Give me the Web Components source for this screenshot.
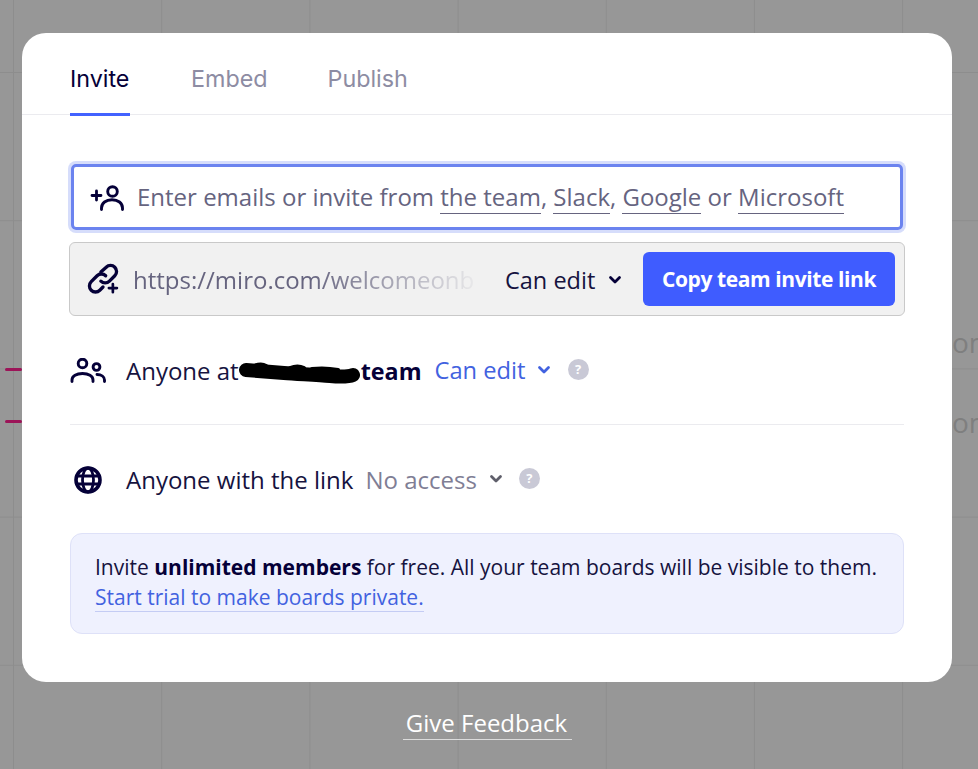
<!DOCTYPE html>
<html>
<head>
<meta charset="utf-8">
<title>Invite</title>
<style>
html, body { margin: 0; height: 100%; overflow: hidden; }
body {
  width: 978px; height: 769px;
  font-family: "Open Sans", sans-serif;
  background-color: #979797;
  background-image:
    linear-gradient(to right, #8d8d8d 1px, transparent 1px),
    linear-gradient(to bottom, #8d8d8d 1px, transparent 1px);
  background-size: 148.2px 148.2px;
  background-position: 13px 72px;
}
</style>
</head>
<body>
<board-backdrop></board-backdrop>
<share-modal>
  <modal-tabs></modal-tabs>
  <invite-field></invite-field>
  <link-bar></link-bar>
  <access-row icon="team" redacted label="Anyone at" strong="team" value="Can edit" tone="blue"></access-row>
  <hr-line></hr-line>
  <access-row icon="globe" label="Anyone with the link" value="No access" tone="grey"></access-row>
  <info-banner>
    Invite <b>unlimited members</b> for free. All your team boards will be visible to them.
    <a slot="link">Start trial to make boards private.</a>
  </info-banner>
</share-modal>
<feedback-link>Give Feedback</feedback-link>

<script>
const chevron = `<svg width="14" height="10" viewBox="0 0 14 10" fill="none"><path d="M2.500 2.500 7 7l4.500-4.500" stroke="currentColor" stroke-width="2.800" stroke-linecap="round" stroke-linejoin="round"/></svg>`

const icons = {
  addUser: `<svg width="34" height="28" viewBox="0 0 34 28" fill="none" stroke="#050038" stroke-width="2.900" stroke-linecap="round"><circle cx="22.500" cy="8.500" r="4.800"/><path d="M11.500 26.500v-1.500c0-5 4.500-8.200 10.500-8.200s10.500 3.200 10.500 8.200v1.500"/><path stroke-width="2.800" d="M2 12.500h9M6.500 8v9"/></svg>`,
  link: `<svg width="30" height="30" viewBox="1 1.500 28 28" fill="none" stroke="#050038" stroke-linecap="round" stroke-linejoin="round" style="overflow:visible"><path stroke-width="3.100" d="M13 9 L18 4.500a5.600 5.600 0 0 1 8 8l-5 5a5.600 5.600 0 0 1-8 0"/><path stroke-width="3.100" d="M17.500 12.500a5.600 5.600 0 0 0-8 0L4 18a5.600 5.600 0 0 0 8 8l3-3"/><path stroke-width="2.500" d="M20.500 24h7.500M24.200 20.200v7.600"/></svg>`,
  team: `<svg width="36" height="26" viewBox="0 0 36 26" fill="none" stroke="#050038" stroke-width="2.900" stroke-linecap="round"><circle cx="12.500" cy="5.500" r="4.300"/><circle cx="26.500" cy="9" r="3.400"/><path d="M2 23.500v-1.500c0-4 4.500-6.500 10.500-6.500s10.500 2.500 10.500 6.500v1.500"/><path d="M27 16.500c4.500 0 7.500 2.300 7.500 5.500v1.500"/></svg>`,
  globe: `<svg width="28" height="28" viewBox="0 0 28 28" fill="none" stroke="#050038"><circle cx="14" cy="14" r="12" stroke-width="3.600"/><ellipse cx="14" cy="14" rx="5.500" ry="12" stroke-width="2.800"/><path stroke-width="2.800" d="M2.500 10h23M2.500 18h23"/></svg>`
}

// every element here just renders its own template into an open shadow root
function define(name, html) {
  customElements.define(name, class extends HTMLElement {
    constructor() {
      super()
      this.attachShadow({ mode: 'open' })
    }
    connectedCallback() {
      this.shadowRoot.innerHTML = typeof html === 'function' ? html(this) : html
    }
  })
}

define('board-backdrop', `
  <style>
    :host { position: absolute; inset: 0; overflow: hidden; color: #7f7f7f; font: 28px/38px "Open Sans", sans-serif; }
    i { position: absolute; left: 5px; width: 17px; height: 3px; background: #9c1458; border-radius: 2px; }
    span { position: absolute; left: 952px; }
  </style>
  <i style="top:368px"></i>
  <i style="top:420px"></i>
  <span style="top:323px">om</span>
  <span style="top:403px">om</span>
`)

define('share-modal', `
  <style>
    :host {
      display: block; box-sizing: border-box; position: absolute;
      left: 22px; top: 33px; width: 930px; height: 649px;
      background: #fff; border-radius: 24px;
      color: #050038;
    }
  </style>
  <slot></slot>
`)

define('modal-tabs', `
  <style>
    :host { display: flex; gap: 61px; height: 81px; padding-left: 48px; border-bottom: 1px solid #ebebef; margin-bottom: 49px; font: 400 23.300px Inter, sans-serif; }
    span { box-sizing: border-box; height: 83px; padding-top: 31px; color: #8d8ca3; }
    span:last-child { margin-left: -1px; }
    .on { width: 60px; color: #050038; border-bottom: 3px solid #4262ff; }
  </style>
  <span class="on">Invite</span><span>Embed</span><span>Publish</span>
`)

define('invite-field', `
  <style>
    :host {
      display: flex; align-items: center; gap: 13px; box-sizing: border-box;
      width: 832px; height: 66px; margin-left: 49px; padding: 0 0 0 16px;
      border: 3px solid #6b83ef; border-radius: 5px;
      box-shadow: 0 0 0 3px #d6ddfb;
      font-size: 24px; color: #66647f;
    }
    u { text-decoration: none; border-bottom: 1px solid #66647f; }
    svg { flex: none; }
    span { white-space: nowrap; margin-top: -2px; }
  </style>
  ${icons.addUser}
  <span>Enter emails or invite from <u>the team</u>, <u>Slack</u>, <u>Google</u> or <u>Microsoft</u></span>
`)

define('link-bar', `
  <style>
    :host {
      display: flex; align-items: center; box-sizing: border-box;
      width: 836px; height: 74px; margin: 12px 0 0 47px; padding: 0 9px 0 18px;
      background: #f1f1f1; border: 1px solid #c9c9c9; border-radius: 6px;
      font-size: 23.500px; color: #16133f;
    }
    svg { flex: none; }
    .url { flex: none; width: 352px; margin-left: 15px; padding-top: 1px; white-space: nowrap; font-size: 24px; color: #66647f;
      -webkit-mask-image: linear-gradient(to right, #000 50%, transparent 100%); mask-image: linear-gradient(to right, #000 50%, transparent 100%); }
    .perm { display: flex; align-items: center; gap: 13px; margin-left: 20px; padding-top: 1px; }
    .perm svg { margin-top: 1px; color: #050038; }
    button { margin-left: auto; width: 252px; height: 54px; border: 0; border-radius: 6px; background: #3f5cff; color: #fff; font: 700 21px "Open Sans", sans-serif; letter-spacing: -0.400px; padding: 0; }
  </style>
  ${icons.link}
  <div class="url">https://miro.com/welcomeonb</div>
  <div class="perm">Can edit ${chevron}</div>
  <button>Copy team invite link</button>
`)

define('access-row', el => {
  const blue = el.getAttribute('tone') === 'blue'
  const strong = el.getAttribute('strong')
  return `
  <style>
    :host {
      display: flex; align-items: center; position: relative; box-sizing: border-box;
      height: 36px; margin: 37px 0 0 48px; font-size: 24px; color: #16133f;
    }
    .ic { flex: none; width: 56px; display: flex; }
    :host([icon=globe]) .ic { padding-left: 4px; width: 52px; }
    .label { white-space: nowrap; margin-top: -2px; }
    b { margin-left: 122px; font-size: 23.300px; font-weight: 700; color: #050038; }
    .val { display: flex; align-items: center; gap: ${blue ? 11 : 12}px; margin: -2px 0 0 ${blue ? 13 : 12}px; font-size: ${blue ? '23.700px' : '24px'}; color: ${blue ? '#4262e0' : '#7f7e95'}; white-space: nowrap; }
    .val svg { color: ${blue ? '#4262e0' : '#5f5f6b'}; }
    .help { flex: none; width: 21px; height: 21px; margin: -3px 0 0 ${blue ? 17 : 16}px; border-radius: 50%; background: #c9c9d6; color: #fff; font: 700 13px/21px "Open Sans", sans-serif; text-align: center; }
    .scribble { position: absolute; left: 168px; top: 0; }
  </style>
  <div class="ic">${icons[el.getAttribute('icon')]}</div>
  <div class="label">${el.getAttribute('label')}${strong ? `<b>${strong}</b>` : ''}</div>
  <div class="val">${el.getAttribute('value')} ${chevron}</div>
  <div class="help">?</div>
  ${el.hasAttribute('redacted') ? `<svg class="scribble" width="124" height="36" viewBox="0 0 124 36" fill="none"><path d="M8 17c12 1 24 2 38 3s34 2 46 3 18 1 23-1" stroke="#000" stroke-width="14" stroke-linecap="round"/><path d="M16 13c5-2 9-2 12 0M52 15c5-2 10-2 14 0M74 16c8-1 16-1 26 1" stroke="#000" stroke-width="4" stroke-linecap="round"/></svg>` : ''}
  `
})

define('hr-line', `
  <style>:host { display: block; height: 1px; width: 834px; margin: 35px 0 0 48px; background: #ebebef; }</style>
`)

define('info-banner', `
  <style>
    :host {
      display: block; box-sizing: border-box; width: 834px; height: 101px; margin: 35px 0 0 48px;
      padding: 18px 24px 0; background: #eff1fe; border: 1px solid #dee1f8; border-radius: 12px;
      font-size: 21px; line-height: 30px; color: #16133f; white-space: nowrap;
    }
    ::slotted(a) { display: table; color: #4262e0; border-bottom: 1px solid #c4ccf4; padding-top: 1px; line-height: 28px; }
    ::slotted(b) { color: #050038; }
  </style>
  <slot></slot><slot name="link"></slot>
`)

define('feedback-link', `
  <style>
    :host {
      display: block; position: absolute; left: 403px; top: 708px; box-sizing: border-box; width: 169px;
      padding: 0 2px 1px 0; text-align: center; color: #fff; font: 24px/30px "Open Sans", sans-serif;
      border-bottom: 1px solid #dcdcdc;
    }
  </style>
  <slot></slot>
`)
</script>
</body>
</html>
